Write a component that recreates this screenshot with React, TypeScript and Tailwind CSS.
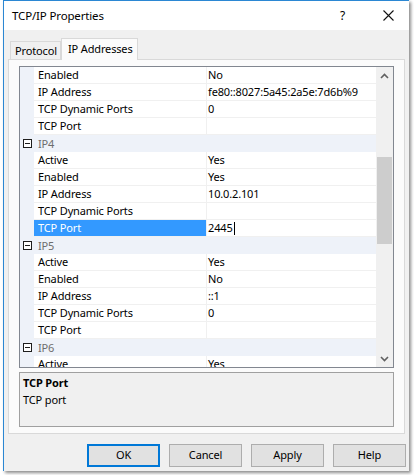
import React from "react";

type Row =
  | { kind: "cat"; name: string }
  | { kind: "prop"; name: string; value: string; selected?: boolean };

const rows: Row[] = [
  { kind: "prop", name: "Enabled", value: "No" },
  { kind: "prop", name: "IP Address", value: "fe80::8027:5a45:2a5e:7d6b%9" },
  { kind: "prop", name: "TCP Dynamic Ports", value: "0" },
  { kind: "prop", name: "TCP Port", value: "" },
  { kind: "cat", name: "IP4" },
  { kind: "prop", name: "Active", value: "Yes" },
  { kind: "prop", name: "Enabled", value: "Yes" },
  { kind: "prop", name: "IP Address", value: "10.0.2.101" },
  { kind: "prop", name: "TCP Dynamic Ports", value: "" },
  { kind: "prop", name: "TCP Port", value: "2445", selected: true },
  { kind: "cat", name: "IP5" },
  { kind: "prop", name: "Active", value: "Yes" },
  { kind: "prop", name: "Enabled", value: "No" },
  { kind: "prop", name: "IP Address", value: "::1" },
  { kind: "prop", name: "TCP Dynamic Ports", value: "0" },
  { kind: "prop", name: "TCP Port", value: "" },
  { kind: "cat", name: "IP6" },
  { kind: "prop", name: "Active", value: "Yes" },
];

function MinusBox() {
  return (
    <svg width="9" height="9" viewBox="0 0 9 9">
      <rect x="0.5" y="0.5" width="8" height="8" fill="#fff" stroke="#1e1e1e" />
      <path d="M2 4.5h5" stroke="#1e1e1e" />
    </svg>
  );
}

function GridRow({ row }: { row: Row }) {
  if (row.kind === "cat") {
    return (
      <div className="flex h-[17px] shrink-0 bg-[#eef2f9]">
        <div className="flex w-[14px] items-center justify-center">
          <MinusBox />
        </div>
        <div className="pl-[4px] leading-[17px] text-[#6d6d6d]">{row.name}</div>
      </div>
    );
  }
  return (
    <div className="flex h-[17px] shrink-0">
      <div className="w-[14px] bg-[#eef2f9]" />
      <div
        className={`w-[172px] border-b border-[#f0f0f0] pl-[4px] leading-[16px] ${
          row.selected ? "bg-[#3399ff] text-white" : "bg-white"
        }`}
      >
        {row.name}
      </div>
      <div className="w-px bg-[#f0f0f0]" />
      <div className="flex flex-1 items-center whitespace-nowrap border-b border-[#f0f0f0] bg-white pl-[1px] leading-[16px]">
        {row.value}
        {row.selected && <span className="ml-[1px] inline-block h-[13px] w-px bg-black" />}
      </div>
    </div>
  );
}

function Scrollbar() {
  return (
    <div className="flex w-[17px] flex-col bg-[#f0f0f0]">
      <div className="flex h-[17px] items-center justify-center">
        <svg width="9" height="6" viewBox="0 0 9 6">
          <path d="M1 5l3.5-3.5L8 5" fill="none" stroke="#606060" strokeWidth="1.6" />
        </svg>
      </div>
      <div className="flex-1">
        <div className="ml-[1px] mt-[73px] h-[87px] w-[15px] bg-[#cdcdcd]" />
      </div>
      <div className="flex h-[17px] items-center justify-center">
        <svg width="9" height="6" viewBox="0 0 9 6">
          <path d="M1 1l3.5 3.5L8 1" fill="none" stroke="#606060" strokeWidth="1.6" />
        </svg>
      </div>
    </div>
  );
}

function DlgButton({ label, primary }: { label: string; primary?: boolean }) {
  return (
    <button
      className={`h-[23px] w-[73px] bg-[#e1e1e1] text-[11px] tracking-[-0.15px] text-black ${
        primary ? "border-2 border-[#0078d7]" : "border border-[#adadad]"
      }`}
    >
      {label}
    </button>
  );
}

export default function App() {
  return (
    <div className="h-[475px] w-[414px] bg-white font-['Noto_Sans','Open_Sans',sans-serif] text-[11px] tracking-[-0.15px] text-black">
      <div className="ml-[3px] flex h-[471px] w-[406px] flex-col border-l border-t border-[#2b87d3] bg-[#f0f0f0] shadow-[2px_2px_3px_rgba(0,0,0,0.45)]">
        {/* title bar */}
        <div className="flex h-[29px] items-center bg-white pl-[8px]">
          <span className="text-[11.5px]">TCP/IP Properties</span>
          <span className="ml-auto mr-[38px] text-[12px]">?</span>
          <svg width="11" height="11" viewBox="0 0 11 11" className="mr-[15px]">
            <path d="M0.5 0.5l10 10M10.5 0.5l-10 10" stroke="#111" strokeWidth="1.1" />
          </svg>
        </div>

        {/* tabs */}
        <div className="flex h-[29px] items-end pl-[6px] pt-[7px]">
          <div className="h-[18px] w-[51px] border border-b-0 border-[#d9d9d9] bg-[#f0f0f0] pl-[4px] leading-[17px]">
            Protocol
          </div>
          <div className="relative -mb-px h-[22px] w-[77px] border border-b-0 border-[#d9d9d9] bg-[#fbfbfb] pl-[6px] leading-[19px]">
            IP Addresses
          </div>
        </div>

        {/* tab page */}
        <div className="mx-[4px] flex h-[375px] flex-col border border-[#d9d9d9] bg-[#fbfbfb] px-[10px] pt-[6px]">
          <div className="flex h-[302px] border border-[#828790] bg-white">
            <div className="flex flex-1 flex-col overflow-hidden">
              {rows.map((r, i) => (
                <GridRow key={i} row={r} />
              ))}
            </div>
            <Scrollbar />
          </div>
          <div className="mt-[4px] h-[55px] border border-[#a0a0a0] bg-[#f0f0f0] pl-[3px] pt-[1px]">
            <div className="font-bold leading-[17px]">TCP Port</div>
            <div className="leading-[17px]">TCP port</div>
          </div>
        </div>

        {/* buttons */}
        <div className="mt-[10px] flex justify-end gap-[9px] pr-[3px]">
          <DlgButton label="OK" primary />
          <DlgButton label="Cancel" />
          <DlgButton label="Apply" />
          <DlgButton label="Help" />
        </div>
      </div>
    </div>
  );
}
